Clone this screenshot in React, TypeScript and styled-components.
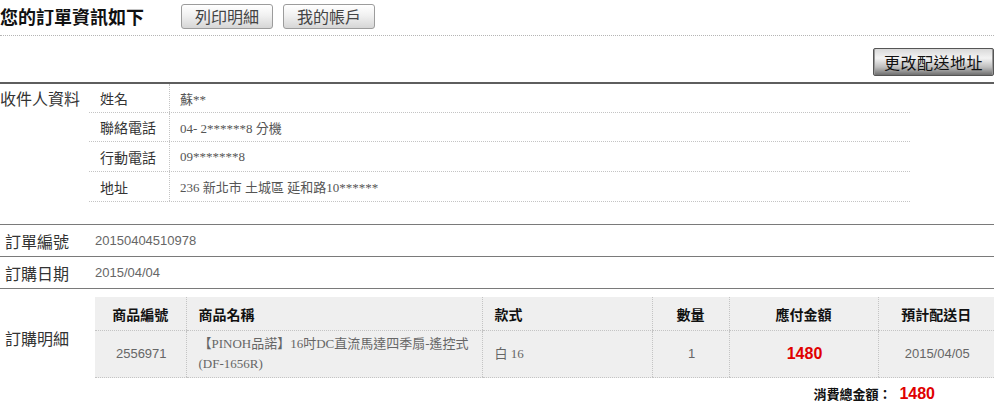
import React from "react";
import styled, { createGlobalStyle } from "styled-components";

const Global = createGlobalStyle`
  html, body { margin: 0; padding: 0; background: #fff; }
  body {
    font-family: "Liberation Sans", "Noto Sans CJK TC", sans-serif;
    color: #333;
  }
`;

const Page = styled.div`
  width: 994px;
`;

const Header = styled.div`
  display: flex;
  align-items: center;
  padding: 4px 0 6px;
  border-bottom: 1px dotted #b5b5b5;
`;

const Title = styled.h1`
  margin: 0 37px 0 0;
  font-size: 18px;
  line-height: 25px;
  font-weight: bold;
  color: #111;
  font-family: "Noto Sans CJK TC", sans-serif;
`;

const LightButton = styled.button`
  height: 25px;
  padding: 0 13px;
  margin-right: 10px;
  border: 1px solid #9c9c9c;
  border-radius: 3px;
  background: linear-gradient(to bottom, #ffffff 0%, #f1f1f1 45%, #d6d6d6 100%);
  font-family: "Noto Sans CJK TC", sans-serif;
  font-size: 16px;
  line-height: 23px;
  color: #444;
  cursor: pointer;
`;

const ActionRow = styled.div`
  display: flex;
  justify-content: flex-end;
  padding: 12px 0 6px;
`;

const DarkButton = styled.button`
  height: 28px;
  width: 121px;
  padding: 0;
  border: 1px solid #555;
  border-radius: 2px;
  background: linear-gradient(to bottom, #d9d9d9 0%, #f3f3f3 35%, #bdbdbd 70%, #6f6f6f 100%);
  box-shadow: inset 1px 0 0 #999, inset -1px 0 0 #999;
  font-family: "Noto Sans CJK TC", sans-serif;
  font-size: 16px;
  line-height: 26px;
  color: #111;
  letter-spacing: 0.5px;
`;

const RecipientSection = styled.section`
  display: grid;
  grid-template-columns: 89px 821px;
  border-top: 2px solid #5e5e5e;
  padding-bottom: 22px;
`;

const SectionLabel = styled.div`
  font-family: "Noto Sans CJK TC", sans-serif;
  font-size: 16px;
  line-height: 29px;
  color: #333;
`;

const InfoTable = styled.div`
  display: flex;
  flex-direction: column;
`;

const InfoRow = styled.div<{ $h: number }>`
  display: grid;
  grid-template-columns: 81px 1fr;
  height: ${(p) => p.$h}px;
  box-sizing: border-box;
  border-bottom: 1px dotted #c4c4c4;
`;

const InfoKey = styled.div`
  display: flex;
  align-items: center;
  padding-left: 11px;
  border-right: 1px dotted #c4c4c4;
  font-family: "Noto Sans CJK TC", sans-serif;
  font-size: 14px;
  color: #333;
`;

const InfoValue = styled.div`
  display: flex;
  align-items: center;
  padding-left: 10px;
  font-family: "Liberation Serif", "Noto Sans CJK TC", serif;
  font-size: 13px;
  color: #555;
`;

const OrderRow = styled.div`
  display: grid;
  grid-template-columns: 95px 1fr;
  align-items: center;
  height: 32px;
  box-sizing: border-box;
  border-top: 1px solid #7a7a7a;
`;

const OrderLabel = styled.div`
  padding-left: 5px;
  font-family: "Noto Sans CJK TC", sans-serif;
  font-size: 16px;
  color: #333;
`;

const OrderValue = styled.div`
  font-family: "Liberation Sans", sans-serif;
  font-size: 13px;
  color: #666;
`;

const DetailSection = styled.section`
  display: grid;
  grid-template-columns: 95px 899px;
  align-items: center;
  border-top: 1px solid #7a7a7a;
  padding-top: 8px;
`;

const Table = styled.table`
  width: 899px;
  border-collapse: collapse;
  table-layout: fixed;
  background: #efefef;
`;

const Th = styled.th<{ $align?: string }>`
  height: 33px;
  padding: 0 12px;
  text-align: ${(p) => p.$align || "center"};
  font-family: "Noto Sans CJK TC", sans-serif;
  font-size: 14px;
  font-weight: bold;
  color: #111;
  border-bottom: 1px dotted #c4c4c4;
  border-left: 1px dotted #c4c4c4;
  &:first-child { border-left: none; }
`;

const Td = styled.td<{ $align?: string; $serif?: boolean }>`
  height: 46px;
  padding: 0 10px 0 12px;
  text-align: ${(p) => p.$align || "center"};
  font-family: ${(p) =>
    p.$serif ? `"Liberation Serif", "Noto Sans CJK TC", serif` : `"Liberation Sans", "Noto Sans CJK TC", sans-serif`};
  font-size: 13px;
  line-height: 20px;
  color: #666;
  border-bottom: 1px dotted #c4c4c4;
  border-left: 1px dotted #c4c4c4;
  white-space: nowrap;
  &:first-child { border-left: none; }
`;

const Price = styled.span`
  font-family: "Liberation Sans", sans-serif;
  font-size: 16px;
  font-weight: bold;
  color: #e00000;
`;

const TotalRow = styled.div`
  display: flex;
  justify-content: flex-end;
  align-items: baseline;
  gap: 8px;
  padding: 6px 59px 0 0;
`;

const TotalLabel = styled.span`
  font-family: "Noto Sans CJK TC", sans-serif;
  font-size: 13px;
  font-weight: bold;
  color: #111;
`;

const Col = styled.col<{ $w: number }>`
  width: ${(p) => p.$w}px;
`;

const recipient = [
  { k: "姓名", v: "蘇**", h: 29 },
  { k: "聯絡電話", v: "04- 2******8 分機", h: 29 },
  { k: "行動電話", v: "09*******8", h: 30 },
  { k: "地址", v: "236 新北市 土城區 延和路10******", h: 30 },
];

export default function App() {
  return (
    <Page>
      <Global />
      <Header>
        <Title>您的訂單資訊如下</Title>
        <LightButton>列印明細</LightButton>
        <LightButton>我的帳戶</LightButton>
      </Header>
      <ActionRow>
        <DarkButton>更改配送地址</DarkButton>
      </ActionRow>
      <RecipientSection>
        <SectionLabel>收件人資料</SectionLabel>
        <InfoTable>
          {recipient.map((r) => (
            <InfoRow key={r.k} $h={r.h}>
              <InfoKey>{r.k}</InfoKey>
              <InfoValue>{r.v}</InfoValue>
            </InfoRow>
          ))}
        </InfoTable>
      </RecipientSection>
      <OrderRow>
        <OrderLabel>訂單編號</OrderLabel>
        <OrderValue>20150404510978</OrderValue>
      </OrderRow>
      <OrderRow>
        <OrderLabel>訂購日期</OrderLabel>
        <OrderValue>2015/04/04</OrderValue>
      </OrderRow>
      <DetailSection>
        <OrderLabel>訂購明細</OrderLabel>
        <Table>
          <colgroup>
            <Col $w={91} />
            <Col $w={296} />
            <Col $w={170} />
            <Col $w={77} />
            <Col $w={149} />
            <Col $w={116} />
          </colgroup>
          <thead>
            <tr>
              <Th>商品編號</Th>
              <Th $align="left">商品名稱</Th>
              <Th $align="left">款式</Th>
              <Th>數量</Th>
              <Th>應付金額</Th>
              <Th>預計配送日</Th>
            </tr>
          </thead>
          <tbody>
            <tr>
              <Td>2556971</Td>
              <Td $align="left" $serif>
                【PINOH品諾】16吋DC直流馬達四季扇-遙控式
                <br />
                (DF-1656R)
              </Td>
              <Td $align="left" $serif>白 16</Td>
              <Td>1</Td>
              <Td>
                <Price>1480</Price>
              </Td>
              <Td>2015/04/05</Td>
            </tr>
          </tbody>
        </Table>
      </DetailSection>
      <TotalRow>
        <TotalLabel>消費總金額：</TotalLabel>
        <Price>1480</Price>
      </TotalRow>
    </Page>
  );
}
